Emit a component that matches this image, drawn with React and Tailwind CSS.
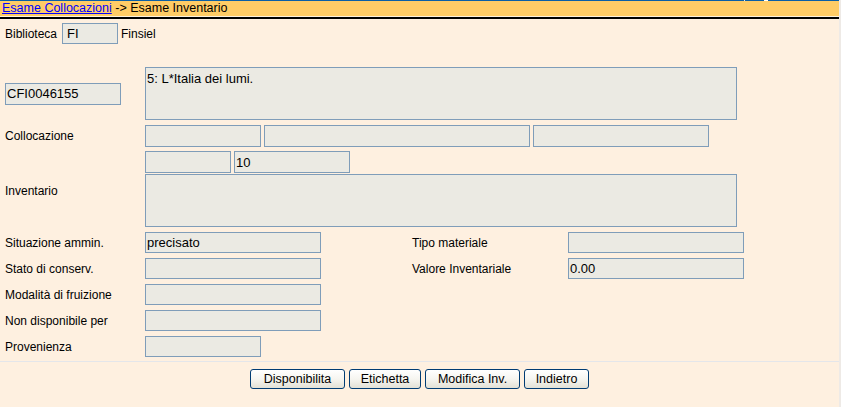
import React from "react";

const box = "border border-[#7f9db9] bg-[#ebeae3] text-[13px] leading-none flex items-center pl-[1px] overflow-hidden whitespace-nowrap";

function Field({ w, h = "h-[21px]", value = "", extra = "" }) {
  return <div className={`${box} ${w} ${h} ${extra}`}>{value}</div>;
}

function Label({ children, extra = "" }) {
  return <div className={`w-[145px] shrink-0 pl-[5px] ${extra}`}>{children}</div>;
}

export default function App() {
  return (
    <div className="w-[841px] h-[407px] bg-[#eeeae6] font-['Liberation_Sans',Arial,sans-serif] text-[12px] text-black overflow-hidden">
      <div className="w-[839px] h-full bg-[#fef0e0] flex flex-col">
        {/* top frame line */}
        <div className="flex h-px shrink-0">
          <div className="w-[744px] bg-[#0a5fa6]" />
          <div className="w-px bg-[#d9e6f0]" />
          <div className="w-[19px] bg-[#0a5fa6]" />
          <div className="w-[4px] bg-white" />
          <div className="flex-1 bg-[#0a5fa6]" />
        </div>
        {/* header */}
        <div className="h-[15px] bg-[#ffcc66] flex items-center pl-[2px] shrink-0 text-[12.5px]">
          <span className="text-[#0000ff] underline">Esame Collocazioni</span>
          <span>&nbsp;-&gt; Esame Inventario</span>
        </div>
        <div className="h-px bg-[#fff3dc] shrink-0" />
        <div className="h-[2px] bg-black shrink-0" />

        {/* Biblioteca */}
        <div className="mt-[4px] flex items-center h-[21px]">
          <div className="w-[62px] pl-[5px]">Biblioteca</div>
          <Field w="w-[56px]" value="FI" extra="pl-[4px]" />
          <div className="ml-[3px]">Finsiel</div>
        </div>

        {/* CFI + title */}
        <div className="mt-[23px] flex items-center">
          <div className="w-[145px] pl-[5px] shrink-0">
            <Field w="w-[116px]" h="h-[22px]" value="CFI0046155" />
          </div>
          <div className="border border-[#7f9db9] bg-[#ebeae3] text-[13px] w-[592px] h-[53px] pl-[1px] pt-[3px] leading-[15px]">
            5: L*Italia dei lumi.
          </div>
        </div>

        {/* Collocazione row 1 */}
        <div className="mt-[5px] flex items-center h-[22px]">
          <Label>Collocazione</Label>
          <Field w="w-[116px]" h="h-[22px]" />
          <Field w="w-[266px]" h="h-[22px]" extra="ml-[3px]" />
          <Field w="w-[176px]" h="h-[22px]" extra="ml-[3px]" />
        </div>
        {/* Collocazione row 2 */}
        <div className="mt-[4px] flex items-center h-[22px]">
          <Label />
          <Field w="w-[86px]" h="h-[22px]" />
          <Field w="w-[116px]" h="h-[22px]" value="10" extra="ml-[3px]" />
        </div>

        {/* Inventario */}
        <div className="mt-[1px] flex items-start">
          <Label extra="pt-[8px]">Inventario</Label>
          <div className="border border-[#7f9db9] bg-[#ebeae3] w-[592px] h-[53px]" />
        </div>

        {/* Situazione */}
        <div className="mt-[5px] flex items-center h-[21px]">
          <Label>Situazione ammin.</Label>
          <Field w="w-[176px]" value="precisato" />
          <div className="ml-[91px] w-[156px]">Tipo materiale</div>
          <Field w="w-[176px]" />
        </div>
        <div className="mt-[5px] flex items-center h-[21px]">
          <Label>Stato di conserv.</Label>
          <Field w="w-[176px]" />
          <div className="ml-[91px] w-[156px]">Valore Inventariale</div>
          <Field w="w-[176px]" value="0.00" />
        </div>
        <div className="mt-[5px] flex items-center h-[21px]">
          <Label>Modalità di fruizione</Label>
          <Field w="w-[176px]" />
        </div>
        <div className="mt-[5px] flex items-center h-[21px]">
          <Label>Non disponibile per</Label>
          <Field w="w-[176px]" />
        </div>
        <div className="mt-[5px] flex items-center h-[21px]">
          <Label>Provenienza</Label>
          <Field w="w-[116px]" />
        </div>

        <div className="mt-[4px] h-px bg-[#e4e6ea]" />

        <div className="mt-[7px] flex justify-center gap-[4px]">
          {[
            ["Disponibilita", "w-[95px]"],
            ["Etichetta", "w-[72px]"],
            ["Modifica Inv.", "w-[95px]"],
            ["Indietro", "w-[65px]"],
          ].map(([t, w]) => (
            <button
              key={t}
              className={`${w} h-[20px] border border-[#003c74] rounded-[3px] bg-linear-to-b from-white via-[#f6f5f0] to-[#e3e1d6] text-[12.5px] leading-none flex items-center justify-center text-black`}
            >
              {t}
            </button>
          ))}
        </div>
      </div>
    </div>
  );
}
